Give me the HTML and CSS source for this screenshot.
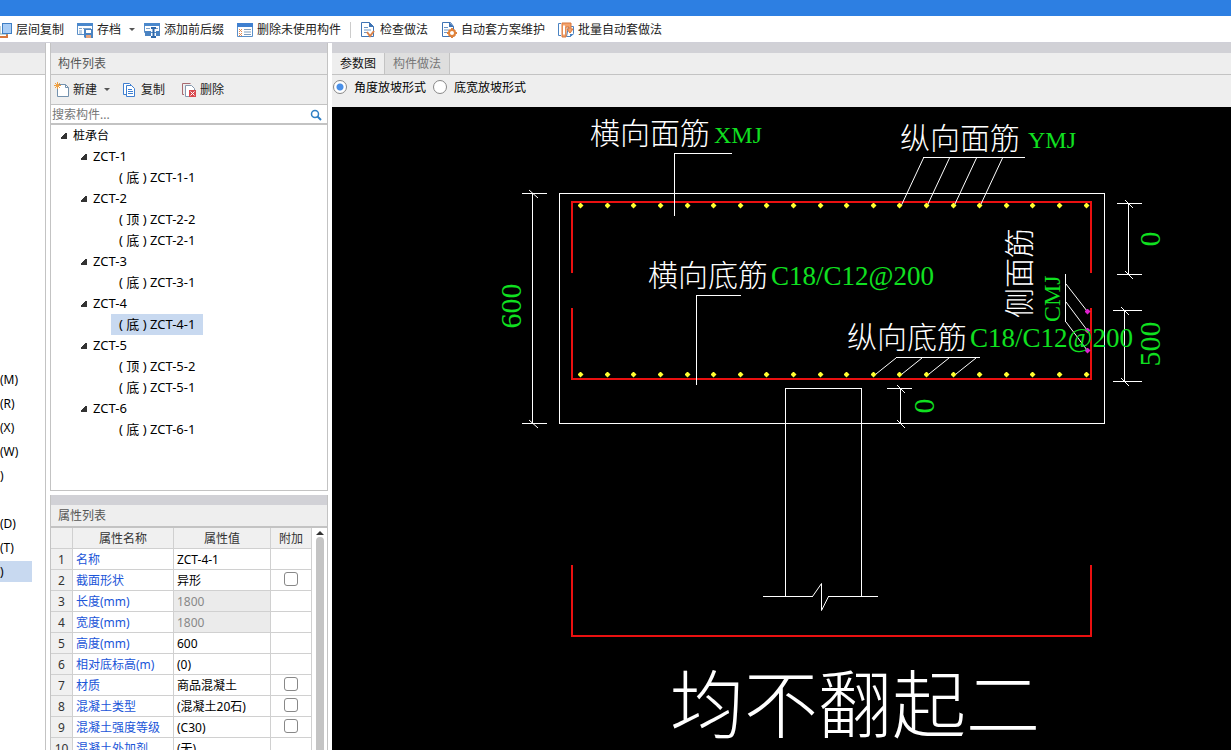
FILE: index.html
```html
<!DOCTYPE html>
<html lang="zh-CN">
<head>
    <meta charset="UTF-8">
    <meta name="viewport" content="width=device-width, initial-scale=1.0">
    <title>构件列表</title>
    <link rel="stylesheet" href="styles.css">
</head>
<body>
    <div class="title-bar"></div>

    <nav class="toolbar">
        <button class="tool">
            <svg class="icon" viewBox="0 0 16 16"><path d="M1 6v9h10v-3" fill="none" stroke="#d9763a" stroke-width="2"/><path d="M4 4v8h8" fill="none" stroke="#8aa" /><rect x="6.500" y="1.500" width="9" height="10" fill="#a9cdf5" stroke="#3f7fc4"/></svg>
            层间复制
        </button>
        <button class="tool">
            <svg class="icon" viewBox="0 0 16 16"><path d="M.5 1.500h15v6M.5 1.500v11H7" fill="#fff" stroke="#5a8fc8"/><path d="M0 1h16v3H0z" fill="#4a88cc"/><path d="M2 6.500h3M6 6.500h8M2 9h3M2 11h3" stroke="#7fa3c9"/><path d="M7 7h9v9H8l-1-1z" fill="#4a83c2"/><path d="M9 8h5v3H9z" fill="#fff"/><path d="M9 13h5v3H9z" fill="#e6a37a"/></svg>
            存档
            <span class="caret"></span>
        </button>
        <button class="tool">
            <svg class="icon" viewBox="0 0 16 16"><path d="M.5 1.500h15v9H.5z" fill="#fff" stroke="#5a8fc8"/><path d="M0 1h16v3H0z" fill="#4a88cc"/><path d="M2 6.500h4M10 6.500h4" stroke="#7fa3c9"/><path d="M1 9h6v5H1zM12 9h4v5h-4z" fill="#4a83c2"/><path d="M7 6h5M9.500 6v9M7 15h5" fill="none" stroke="#2f68aa" stroke-width="2"/></svg>
            添加前后缀
        </button>
        <button class="tool">
            <svg class="icon" viewBox="0 0 16 16"><path d="M.5 1.500h15v13H.5z" fill="#fff" stroke="#5a8fc8"/><path d="M0 1h16v4H0z" fill="#3f80d0"/><path d="M7 7.500h7M7 10h7M7 12.500h7" stroke="#7f9dbd"/><path d="M2 7l3 3m0-3l-3 3m0 1l3 3m0-3l-3 3" stroke="#e58a4e"/></svg>
            删除未使用构件
        </button>
        <span class="separator"></span>
        <button class="tool">
            <svg class="icon" viewBox="0 0 16 16"><path d="M1.500.5h8l4 4v10h-12z" fill="#fff" stroke="#3f74b5"/><path d="M9 0l5 5H9z" fill="#3f74b5"/><path d="M4 5.500h4M4 8h7M4 10.500h3" stroke="#6d96c6"/><path d="M7 10l3 4 4-5" fill="none" stroke="#d9824a" stroke-width="2"/></svg>
            检查做法
        </button>
        <button class="tool">
            <svg class="icon" viewBox="0 0 16 16"><path d="M1.500.5h8l3 4v10h-11z" fill="#fff" stroke="#3f74b5"/><path d="M8 0l5 5H8z" fill="#3f74b5"/><path d="M3 5.500h4M3 8h5M3 10.500h3" stroke="#6d96c6"/><circle cx="11" cy="11" r="3" fill="#fff" stroke="#e0823a" stroke-width="2"/><path d="M11 6v2M11 14v2M6 11h2M14 11h2M8 8l1 1M13 13l1 1M14 8l-1 1M8 14l1-1" stroke="#e0823a" stroke-width="2"/></svg>
            自动套方案维护
        </button>
        <button class="tool">
            <svg class="icon" viewBox="0 0 16 16"><path d="M3 1.500H.5v12H3" fill="none" stroke="#4a83c2"/><path d="M10.500 4.500h5v7l-3 3h-4z" fill="#fff" stroke="#4a83c2"/><path d="M4 1v14h4V5h3v2H9l3 4 3-4h-2V1z" fill="#f3a36c" stroke="#d9763a"/><path d="M6 3.500v9" stroke="#fff" stroke-width="2"/><path d="M12 15v-3h4z" fill="#4a83c2"/></svg>
            批量自动套做法
        </button>
    </nav>

    <main class="workspace">
        <aside class="side-menu">
            <div class="strip"></div>
            <div class="panel-title"></div>
            <ul class="menu">
                <li>(M)</li>
                <li>(R)</li>
                <li>(X)</li>
                <li>(W)</li>
                <li>)</li>
                <li></li>
                <li>(D)</li>
                <li>(T)</li>
                <li><span class="current">)</span></li>
            </ul>
        </aside>

        <div class="middle">
            <section class="panel component-panel">
                <div class="strip"></div>
                <h2 class="panel-title">构件列表</h2>
                <div class="panel-tools">
                    <button class="tool">
                        <svg class="icon" viewBox="0 0 16 16"><path d="M3.500 2.500h8l3 3v9h-11z" fill="#fff" stroke="#7492ae"/><path d="M11.500 2.500v3h3" fill="none" stroke="#7492ae"/><path d="M3.500 0v7M0 3.500h7M1 1l5 5M6 1L1 6" stroke="#f0a040"/></svg>
                        新建
                        <span class="caret"></span>
                    </button>
                    <button class="tool">
                        <svg class="icon" viewBox="0 0 16 16"><path d="M1.500 1.500h6l2 2v9h-8z" fill="#fff" stroke="#3f7fd0"/><path d="M4.500 3.500h5l3 3v8h-8z" fill="#fff" stroke="#3f7fd0"/><path d="M6 7.500h4M6 9.500h5M6 11.500h5" stroke="#3f7fd0"/></svg>
                        复制
                    </button>
                    <button class="tool">
                        <svg class="icon" viewBox="0 0 16 16"><path d="M3 12.500H1.500v-11h8" fill="none" stroke="#a86a70"/><path d="M4.500 3.500h6l3 3v8h-9z" fill="#fff" stroke="#8497ad"/><path d="M8 8h7v7H8z" fill="#d9484e"/><path d="M9.500 9.500l4 4m0-4l-4 4" stroke="#fff"/></svg>
                        删除
                    </button>
                </div>
                <div class="search">
                    <input type="text" placeholder="搜索构件..." aria-label="搜索构件">
                    <svg class="search-icon" viewBox="0 0 12 12"><circle cx="5" cy="5" r="3.500" fill="none" stroke="#2f7fc4" stroke-width="1.500"/><path d="M7.500 7.500l3.500 3.500" stroke="#2f7fc4" stroke-width="2"/></svg>
                </div>
                <ul class="tree">
                    <li><span class="node root">桩承台</span>
                        <ul>
                            <li><span class="node">ZCT-1</span>
                                <ul>
                                    <li><span class="leaf">( 底 ) ZCT-1-1</span></li>
                                </ul>
                            </li>
                            <li><span class="node">ZCT-2</span>
                                <ul>
                                    <li><span class="leaf">( 顶 ) ZCT-2-2</span></li>
                                    <li><span class="leaf">( 底 ) ZCT-2-1</span></li>
                                </ul>
                            </li>
                            <li><span class="node">ZCT-3</span>
                                <ul>
                                    <li><span class="leaf">( 底 ) ZCT-3-1</span></li>
                                </ul>
                            </li>
                            <li><span class="node">ZCT-4</span>
                                <ul>
                                    <li><span class="leaf selected">( 底 ) ZCT-4-1</span></li>
                                </ul>
                            </li>
                            <li><span class="node">ZCT-5</span>
                                <ul>
                                    <li><span class="leaf">( 顶 ) ZCT-5-2</span></li>
                                    <li><span class="leaf">( 底 ) ZCT-5-1</span></li>
                                </ul>
                            </li>
                            <li><span class="node">ZCT-6</span>
                                <ul>
                                    <li><span class="leaf">( 底 ) ZCT-6-1</span></li>
                                </ul>
                            </li>
                        </ul>
                    </li>
                </ul>
            </section>

            <section class="panel property-panel">
                <div class="strip"></div>
                <h2 class="panel-title">属性列表</h2>
                <div class="property-body">
                    <table class="properties">
                        <thead>
                            <tr><th class="col-no"></th><th class="col-name">属性名称</th><th class="col-value">属性值</th><th class="col-extra">附加</th></tr>
                        </thead>
                        <tbody>
                            <tr><th>1</th><td>名称</td><td>ZCT-4-1</td><td></td></tr>
                            <tr><th>2</th><td>截面形状</td><td>异形</td><td><input type="checkbox" aria-label="附加 截面形状"></td></tr>
                            <tr><th>3</th><td>长度(mm)</td><td class="locked">1800</td><td></td></tr>
                            <tr><th>4</th><td>宽度(mm)</td><td class="locked">1800</td><td></td></tr>
                            <tr><th>5</th><td>高度(mm)</td><td>600</td><td></td></tr>
                            <tr><th>6</th><td>相对底标高(m)</td><td>(0)</td><td></td></tr>
                            <tr><th>7</th><td>材质</td><td>商品混凝土</td><td><input type="checkbox" aria-label="附加 材质"></td></tr>
                            <tr><th>8</th><td>混凝土类型</td><td>(混凝土20石)</td><td><input type="checkbox" aria-label="附加 混凝土类型"></td></tr>
                            <tr><th>9</th><td>混凝土强度等级</td><td>(C30)</td><td><input type="checkbox" aria-label="附加 混凝土强度等级"></td></tr>
                            <tr><th>10</th><td>混凝土外加剂</td><td>(无)</td><td></td></tr>
                        </tbody>
                    </table>
                    <div class="scrollbar">
                        <span class="scroll-up"></span>
                        <span class="scroll-thumb"></span>
                    </div>
                </div>
            </section>
        </div>

        <section class="viewer">
            <div class="strip"></div>
            <div class="tabs">
                <button class="tab active">参数图</button>
                <button class="tab">构件做法</button>
            </div>
            <div class="slope-options">
                <label><input type="radio" name="slope" checked> 角度放坡形式</label>
                <label><input type="radio" name="slope"> 底宽放坡形式</label>
            </div>
            <div class="canvas">
                <svg class="drawing" viewBox="332 107 899 643">
                    <defs>
                        <marker id="bar" markerUnits="userSpaceOnUse" markerWidth="6" markerHeight="6" refX="3" refY="3">
                            <path d="M3 0l3 3-3 3-3-3z" fill="#ffff30"/>
                        </marker>
                        <marker id="sideBar" markerUnits="userSpaceOnUse" markerWidth="6" markerHeight="6" refX="3" refY="3">
                            <path d="M3 0l3 3-3 3-3-3z" fill="#e020d0"/>
                        </marker>
                    </defs>

                    <!-- cap outline and pile -->
                    <g class="outline">
                        <path d="M559.500 193.500h545v230h-545z"/>
                        <path d="M785.500 597V388.500h76V597"/>
                        <path d="M763 596.500h50M828 596.500h50"/>
                    </g>
                    <path class="slant" d="M812.500 596.500l9-13v27l7-14"/>

                    <!-- rebar -->
                    <g class="rebar">
                        <path d="M572 273V202h519v71"/>
                        <path d="M572 308v71h519v-71"/>
                        <path d="M572 565v71h519v-71"/>
                    </g>

                    <!-- dimension lines -->
                    <g class="outline">
                        <path d="M532.500 193v231M522 193.500h25M522 423.500h25"/>
                        <path d="M1128.500 203v72M1117 203.500h25M1117 274.500h25"/>
                        <path d="M1124.500 310v72M1113 310.500h29M1113 381.500h29"/>
                        <path d="M900.500 388v36M887 388.500h25"/>
                    </g>
                    <path class="slant" d="M529 190l9 8M529 420l9 8M1125 200l8 8M1125 271l8 8M1121 307l8 8M1121 378l8 8M897 385l8 8M897 420l8 8"/>

                    <!-- leaders -->
                    <g class="outline">
                        <path d="M732 153.500h-57.500V216"/>
                        <path d="M741 295.500h-44.500V385"/>
                        <path d="M923 157.500h102M896 357.500h84M1065.500 274v48"/>
                    </g>
                    <path class="slant" d="M923.500 158l-22 47M949.500 158l-22 47M976.500 158l-22 47M1002.500 158l-22 47"/>
                    <path class="slant" d="M896 358l-20 16M922 358l-20 16M949 358l-20 16M976 358l-20 16"/>
                    <path class="slant" d="M1066 284l21 27M1066 302l21 28M1066 322l21 28"/>

                    <polyline class="dots" points="580.500,205.500 607.500,205.500 633.500,205.500 660.500,205.500 687.500,205.500 713.500,205.500 740.500,205.500 766.500,205.500 793.500,205.500 820.500,205.500 846.500,205.500 873.500,205.500 899.500,205.500 926.500,205.500 953.500,205.500 979.500,205.500 1006.500,205.500 1032.500,205.500 1059.500,205.500 1086.500,205.500"/>
                    <polyline class="dots" points="580.500,374.500 607.500,374.500 633.500,374.500 660.500,374.500 687.500,374.500 713.500,374.500 740.500,374.500 766.500,374.500 793.500,374.500 820.500,374.500 846.500,374.500 873.500,374.500 899.500,374.500 926.500,374.500 953.500,374.500 979.500,374.500 1006.500,374.500 1032.500,374.500 1059.500,374.500 1086.500,374.500"/>
                    <polyline class="side-dots" points="1087.500,311.500 1087.500,330.500 1087.500,350.500"/>

                    <g class="label">
                        <text x="590" y="144">横向面筋</text>
                        <text x="900" y="149">纵向面筋</text>
                        <text x="648" y="286">横向底筋</text>
                        <text x="847" y="348">纵向底筋</text>
                        <text transform="translate(1030 318) rotate(-90)">侧面筋</text>
                    </g>
                    <g class="code">
                        <text x="714" y="143">XMJ</text>
                        <text x="1028" y="148">YMJ</text>
                        <text transform="translate(1060 322) rotate(-90)">CMJ</text>
                    </g>
                    <g class="spec">
                        <text x="771" y="285">C18/C12@200</text>
                        <text x="970" y="347">C18/C12@200</text>
                    </g>
                    <g class="dimension">
                        <text transform="translate(521 306) rotate(-90)">600</text>
                        <text transform="translate(1160 344) rotate(-90)">500</text>
                        <text transform="translate(1160 239) rotate(-90)">0</text>
                        <text transform="translate(934 406) rotate(-90)">0</text>
                    </g>
                    <text class="caption" x="670" y="732">均不翻起二</text>
                </svg>
            </div>
        </section>
    </main>
</body>
</html>
```
FILE: styles.css
```css
:root {
    --accent: #2d7fe2;
    --strip: #d1d1d6;
    --panel: #eeeeee;
    --border: #c3c3c3;
    --selected: #c8d9f0;
    --link: #1a55d8;
}

* {
    box-sizing: border-box;
    margin: 0;
    padding: 0;
}

body {
    display: flex;
    flex-direction: column;
    height: 100vh;
    overflow: hidden;
    background: #fff;
    color: #000;
    font-family: "Noto Sans", "Noto Sans CJK SC", sans-serif;
    font-size: 12px;
    line-height: 16px;
}

ul {
    list-style: none;
}

button, input {
    font: inherit;
    color: inherit;
    border: none;
    background: none;
}

.title-bar {
    flex: none;
    height: 16px;
    background: var(--accent);
}

.toolbar {
    flex: none;
    display: flex;
    align-items: center;
    gap: 13px;
    height: 27px;
    margin-left: -4px;
    padding-top: 1px;
    border-bottom: 1px solid #d0d0d8;
    color: #222;
}

.tool {
    display: flex;
    align-items: center;
    gap: 4px;
    white-space: nowrap;
}

.icon {
    width: 16px;
    height: 16px;
}

.caret {
    margin: 0 -4px 0 4px;
    border: 3px solid transparent;
    border-top-color: #555;
    border-bottom: none;
}

.separator {
    width: 1px;
    height: 16px;
    margin: 0 -4px;
    background: #ccc;
}

.workspace {
    flex: 1;
    display: flex;
    gap: 4px;
    min-height: 0;
}

.strip {
    flex: none;
    height: 10px;
    background: var(--strip);
}

.panel-title {
    flex: none;
    height: 22px;
    padding-left: 7px;
    border-bottom: 1px solid var(--border);
    background: var(--panel);
    color: #555;
    font-size: 12px;
    font-weight: 400;
    line-height: 21px;
}

.side-menu {
    flex: none;
    width: 46px;
    border-right: 1px solid var(--border);
}

.menu {
    padding-top: 293px;
}

.menu li {
    height: 24px;
    line-height: 24px;
}

.current {
    display: block;
    width: 32px;
    height: 21px;
    margin-top: 1px;
    line-height: 21px;
    background: var(--selected);
}

.middle {
    flex: none;
    display: flex;
    flex-direction: column;
    gap: 4px;
    width: 278px;
}

.panel {
    display: flex;
    flex-direction: column;
    min-height: 0;
    border: solid var(--border);
    border-width: 0 1px;
}

.component-panel {
    flex: 448;
    border-bottom-width: 1px;
}

.property-panel {
    flex: 255;
}

.panel-tools {
    flex: none;
    display: flex;
    align-items: center;
    gap: 16px;
    height: 30px;
    padding-left: 3px;
    border-bottom: 1px solid var(--border);
    background: var(--panel);
    color: #222;
}

.panel-tools .tool {
    gap: 3px;
}

.search {
    flex: none;
    display: flex;
    align-items: center;
    height: 20px;
    padding: 1px 5px 0 1px;
    border-bottom: 2px solid var(--border);
}

.search input {
    flex: 1;
    min-width: 0;
}

.search input::placeholder {
    color: #777;
    opacity: 1;
}

.search-icon {
    width: 12px;
    height: 12px;
}

.tree {
    flex: 1;
    padding-left: 10px;
    font-size: 13px;
}

.tree ul {
    padding-left: 20px;
}

.tree li {
    line-height: 21px;
}

.root {
    font-size: 12px;
}

.node {
    display: flex;
    align-items: center;
    gap: 6px;
}

.node::before {
    content: "";
    width: 6px;
    height: 6px;
    background: linear-gradient(135deg, transparent 40%, #333 40%);
}

.leaf {
    display: inline-block;
    height: 21px;
    margin-left: 10px;
    padding: 0 8px;
    vertical-align: top;
}

.selected {
    background: var(--selected);
}

.property-body {
    flex: 1;
    display: flex;
    min-height: 0;
    overflow: hidden;
    border-top: 1px solid var(--border);
}

.properties {
    flex: 1;
    align-self: flex-start;
    table-layout: fixed;
    width: 100%;
    border-collapse: separate;
    border-spacing: 0;
}

.properties th, .properties td {
    height: 21px;
    padding: 2px 3px 0;
    border: solid #d0d0d0;
    border-width: 0 1px 1px 0;
    font-weight: 400;
    line-height: 18px;
    white-space: nowrap;
}

.properties th {
    padding: 2px 0 0;
    background: #f0f0f0;
    color: #333;
    text-align: center;
}

.col-no {
    width: 22px;
}

.col-name {
    width: 101px;
}

.col-value {
    width: 97px;
}

.properties td:nth-child(2) {
    color: var(--link);
}

.properties td:last-child {
    text-align: center;
    vertical-align: top;
}

.properties .locked {
    background: #ebebeb;
    color: #888;
}

.properties input {
    appearance: none;
    display: block;
    width: 14px;
    height: 14px;
    margin: 0 auto;
    border: 1px solid #888;
    border-radius: 3px;
    background: #fff;
}

.scrollbar {
    flex: none;
    display: flex;
    flex-direction: column;
    align-items: center;
    gap: 2px;
    width: 15px;
    padding-top: 3px;
}

.scroll-up {
    border: 4px solid transparent;
    border-top: none;
    border-bottom-color: #333;
}

.scroll-thumb {
    flex: 1;
    width: 8px;
    border-radius: 4px 4px 0 0;
    background: #c4c4c4;
}

.viewer {
    flex: 1;
    display: flex;
    flex-direction: column;
    min-width: 0;
    background: var(--panel);
}

.tabs {
    flex: none;
    display: flex;
    height: 22px;
    border-bottom: 1px solid var(--border);
}

.tab {
    padding: 0 8px;
    border-right: 1px solid var(--border);
    background: #dedede;
    color: #777;
}

.tab.active {
    background: var(--panel);
    color: #111;
}

.slope-options {
    flex: none;
    display: flex;
    gap: 7px;
    height: 32px;
    padding: 5px 0 0 1px;
}

.slope-options label {
    display: flex;
    gap: 7px;
    height: 16px;
}

.slope-options input {
    appearance: none;
    width: 14px;
    height: 14px;
    border: 1px solid #888;
    border-radius: 50%;
    background: #fff;
}

.slope-options input:checked {
    background: radial-gradient(circle, #4a90e8 3px, #fff 4px);
}

.canvas {
    flex: 1;
    min-height: 0;
    background: #000;
}

.drawing {
    display: block;
    width: 100%;
    height: 100%;
}

.outline {
    fill: none;
    stroke: #fff;
    shape-rendering: crispEdges;
}

.slant {
    fill: none;
    stroke: #fff;
}

.rebar {
    fill: none;
    stroke: #ea1010;
    stroke-width: 2;
    shape-rendering: crispEdges;
}

.dots, .side-dots {
    fill: none;
    stroke: none;
    marker: url(#bar);
}

.side-dots {
    marker: url(#sideBar);
}

.label, .caption {
    fill: #fff;
    font-family: "Noto Sans CJK SC", sans-serif;
    font-weight: 300;
}

.label {
    font-size: 30px;
}

.caption {
    font-size: 74px;
}

.code, .spec, .dimension {
    fill: #10e020;
    font-family: "Liberation Serif", serif;
}

.code {
    font-size: 24px;
}

.spec {
    font-size: 27px;
}

.dimension {
    font-size: 30px;
    text-anchor: middle;
}
```
